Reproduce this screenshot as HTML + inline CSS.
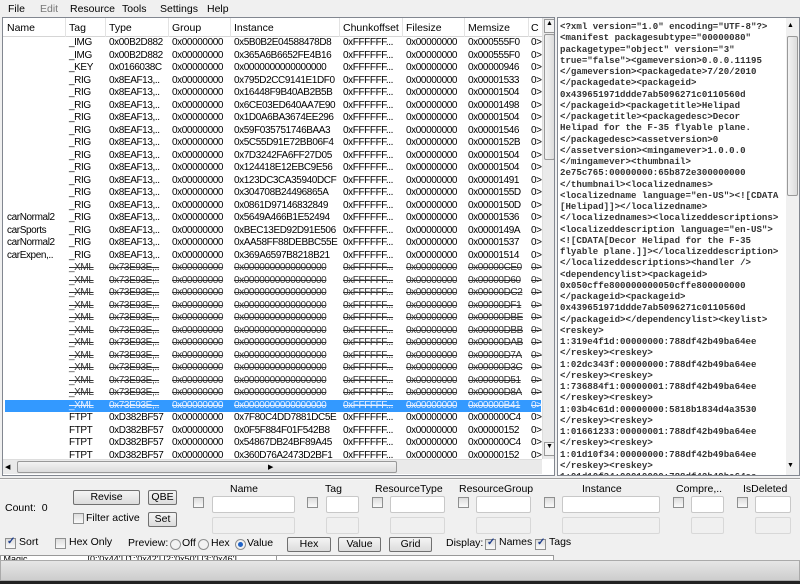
<!DOCTYPE html>
<html><head><meta charset="utf-8"><style>
*{box-sizing:border-box;margin:0;padding:0}
body{width:800px;height:584px;overflow:hidden;background:#f0f0f0;font-family:"Liberation Sans",sans-serif;font-size:10px;color:#000;position:relative}
.a{position:absolute}
.menu span{position:absolute;top:3px;font-size:10.5px}
#grid{left:2px;top:17px;width:553px;height:459px;background:#fff;border:1px solid #828790;overflow:hidden}
.hdr{position:absolute;top:0;left:0;height:19px;width:540px;border-bottom:1px solid #d5d5d5;background:#fff}
.hdr span{position:absolute;top:4px;font-size:10.5px}
.hdr i{position:absolute;top:0;width:1px;height:19px;background:#e3e3e3}
.row{position:absolute;left:0;width:538px;height:12.5px;white-space:nowrap;letter-spacing:-0.4px;font-size:10px;line-height:12.5px}
.row span{position:absolute}
.st span{text-decoration:line-through;color:#333}
.sel{background:#3399ff;color:#e8f0ff}
.sel span{text-decoration:line-through}
.c0{left:4px}.c1{left:66px}.c2{left:106px}.c3{left:169px}.c4{left:231px}.c5{left:340px}.c6{left:403px}.c7{left:465px}.c8{left:528px}
#vs{left:539px;top:0;width:13px;height:441px;background:#eaeaea;border-left:1px solid #ddd}
#hs{left:0;top:441px;width:539px;height:15px;background:#eaeaea;border-top:1px solid #ddd}
#xml{left:557px;top:17px;width:243px;height:459px;background:#fff;border:1px solid #828790;overflow:hidden}
#xml pre{position:absolute;left:2px;top:3px;font-family:"Liberation Mono",monospace;font-size:9.1px;line-height:11.25px;font-weight:bold;color:#333}
.btn{position:absolute;height:15px;border:1px solid #707070;border-radius:2px;background:linear-gradient(#f4f4f4,#dcdcdc);text-align:center;font-size:10.5px;line-height:13px}
.cb{position:absolute;width:11px;height:11px;border:1px solid #8e8f8f;background:linear-gradient(#ddd,#fafafa)}
.cb.k::after{content:"✓";position:absolute;left:1px;top:-3px;font-size:10px;color:#1c3c8c;font-weight:bold}
.inp{position:absolute;height:17px;border:1px solid #c8c8c8;background:#fff;border-radius:2px}
.inp.d{background:#f0f0f0;border-color:#d8d8d8}
.lb{position:absolute;font-size:10.5px}
.rd{position:absolute;width:11px;height:11px;border-radius:50%;border:1px solid #8e8f8f;background:#f2f2f2}
.rd.on::after{content:"";position:absolute;left:2px;top:2px;width:5px;height:5px;border-radius:50%;background:#1f63c6}
</style></head><body>
<div class="menu">
<span style="left:8px">File</span><span style="left:40px;color:#777">Edit</span><span style="left:70px">Resource</span><span style="left:122px">Tools</span><span style="left:160px">Settings</span><span style="left:207px">Help</span>
</div>
<div id="grid" class="a">
<div class="hdr">
<span style="left:4px">Name</span><span style="left:66px">Tag</span><span style="left:106px">Type</span><span style="left:169px">Group</span><span style="left:231px">Instance</span><span style="left:340px">Chunkoffset</span><span style="left:403px">Filesize</span><span style="left:465px">Memsize</span><span style="left:528px">C</span>
<i style="left:62px"></i><i style="left:102px"></i><i style="left:165px"></i><i style="left:227px"></i><i style="left:336px"></i><i style="left:399px"></i><i style="left:461px"></i><i style="left:525px"></i>
</div>
<div class="row" style="top:19px"><span class="c1">_IMG</span><span class="c2">0x00B2D882</span><span class="c3">0x00000000</span><span class="c4">0x5B0B2E04588478D8</span><span class="c5">0xFFFFFF...</span><span class="c6">0x00000000</span><span class="c7">0x000555F0</span><span class="c8">0&gt;</span></div>
<div class="row" style="top:31.5px"><span class="c1">_IMG</span><span class="c2">0x00B2D882</span><span class="c3">0x00000000</span><span class="c4">0x365A6B6652FE4B16</span><span class="c5">0xFFFFFF...</span><span class="c6">0x00000000</span><span class="c7">0x000555F0</span><span class="c8">0&gt;</span></div>
<div class="row" style="top:44px"><span class="c1">_KEY</span><span class="c2">0x0166038C</span><span class="c3">0x00000000</span><span class="c4">0x0000000000000000</span><span class="c5">0xFFFFFF...</span><span class="c6">0x00000000</span><span class="c7">0x00000946</span><span class="c8">0&gt;</span></div>
<div class="row" style="top:56.5px"><span class="c1">_RIG</span><span class="c2">0x8EAF13,..</span><span class="c3">0x00000000</span><span class="c4">0x795D2CC9141E1DF0</span><span class="c5">0xFFFFFF...</span><span class="c6">0x00000000</span><span class="c7">0x00001533</span><span class="c8">0&gt;</span></div>
<div class="row" style="top:69px"><span class="c1">_RIG</span><span class="c2">0x8EAF13,..</span><span class="c3">0x00000000</span><span class="c4">0x16448F9B40AB2B5B</span><span class="c5">0xFFFFFF...</span><span class="c6">0x00000000</span><span class="c7">0x00001504</span><span class="c8">0&gt;</span></div>
<div class="row" style="top:81.5px"><span class="c1">_RIG</span><span class="c2">0x8EAF13,..</span><span class="c3">0x00000000</span><span class="c4">0x6CE03ED640AA7E90</span><span class="c5">0xFFFFFF...</span><span class="c6">0x00000000</span><span class="c7">0x00001498</span><span class="c8">0&gt;</span></div>
<div class="row" style="top:94px"><span class="c1">_RIG</span><span class="c2">0x8EAF13,..</span><span class="c3">0x00000000</span><span class="c4">0x1D0A6BA3674EE296</span><span class="c5">0xFFFFFF...</span><span class="c6">0x00000000</span><span class="c7">0x00001504</span><span class="c8">0&gt;</span></div>
<div class="row" style="top:106.5px"><span class="c1">_RIG</span><span class="c2">0x8EAF13,..</span><span class="c3">0x00000000</span><span class="c4">0x59F035751746BAA3</span><span class="c5">0xFFFFFF...</span><span class="c6">0x00000000</span><span class="c7">0x00001546</span><span class="c8">0&gt;</span></div>
<div class="row" style="top:119px"><span class="c1">_RIG</span><span class="c2">0x8EAF13,..</span><span class="c3">0x00000000</span><span class="c4">0x5C55D91E72BB06F4</span><span class="c5">0xFFFFFF...</span><span class="c6">0x00000000</span><span class="c7">0x0000152B</span><span class="c8">0&gt;</span></div>
<div class="row" style="top:131.5px"><span class="c1">_RIG</span><span class="c2">0x8EAF13,..</span><span class="c3">0x00000000</span><span class="c4">0x7D3242FA6FF27D05</span><span class="c5">0xFFFFFF...</span><span class="c6">0x00000000</span><span class="c7">0x00001504</span><span class="c8">0&gt;</span></div>
<div class="row" style="top:144px"><span class="c1">_RIG</span><span class="c2">0x8EAF13,..</span><span class="c3">0x00000000</span><span class="c4">0x124418E12EBC9E56</span><span class="c5">0xFFFFFF...</span><span class="c6">0x00000000</span><span class="c7">0x00001504</span><span class="c8">0&gt;</span></div>
<div class="row" style="top:156.5px"><span class="c1">_RIG</span><span class="c2">0x8EAF13,..</span><span class="c3">0x00000000</span><span class="c4">0x123DC3CA35940DCF</span><span class="c5">0xFFFFFF...</span><span class="c6">0x00000000</span><span class="c7">0x00001491</span><span class="c8">0&gt;</span></div>
<div class="row" style="top:169px"><span class="c1">_RIG</span><span class="c2">0x8EAF13,..</span><span class="c3">0x00000000</span><span class="c4">0x304708B24496865A</span><span class="c5">0xFFFFFF...</span><span class="c6">0x00000000</span><span class="c7">0x0000155D</span><span class="c8">0&gt;</span></div>
<div class="row" style="top:181.5px"><span class="c1">_RIG</span><span class="c2">0x8EAF13,..</span><span class="c3">0x00000000</span><span class="c4">0x0861D97146832849</span><span class="c5">0xFFFFFF...</span><span class="c6">0x00000000</span><span class="c7">0x0000150D</span><span class="c8">0&gt;</span></div>
<div class="row" style="top:194px"><span class="c0">carNormal2</span><span class="c1">_RIG</span><span class="c2">0x8EAF13,..</span><span class="c3">0x00000000</span><span class="c4">0x5649A466B1E52494</span><span class="c5">0xFFFFFF...</span><span class="c6">0x00000000</span><span class="c7">0x00001536</span><span class="c8">0&gt;</span></div>
<div class="row" style="top:206.5px"><span class="c0">carSports</span><span class="c1">_RIG</span><span class="c2">0x8EAF13,..</span><span class="c3">0x00000000</span><span class="c4">0xBEC13ED92D91E506</span><span class="c5">0xFFFFFF...</span><span class="c6">0x00000000</span><span class="c7">0x0000149A</span><span class="c8">0&gt;</span></div>
<div class="row" style="top:219px"><span class="c0">carNormal2</span><span class="c1">_RIG</span><span class="c2">0x8EAF13,..</span><span class="c3">0x00000000</span><span class="c4">0xAA58FF88DEBBC55E</span><span class="c5">0xFFFFFF...</span><span class="c6">0x00000000</span><span class="c7">0x00001537</span><span class="c8">0&gt;</span></div>
<div class="row" style="top:231.5px"><span class="c0">carExpen,..</span><span class="c1">_RIG</span><span class="c2">0x8EAF13,..</span><span class="c3">0x00000000</span><span class="c4">0x369A6597B8218B21</span><span class="c5">0xFFFFFF...</span><span class="c6">0x00000000</span><span class="c7">0x00001514</span><span class="c8">0&gt;</span></div>
<div class="row st" style="top:244px"><span class="c1">_XML</span><span class="c2">0x73E93E,..</span><span class="c3">0x00000000</span><span class="c4">0x0000000000000000</span><span class="c5">0xFFFFFF...</span><span class="c6">0x00000000</span><span class="c7">0x00000CE0</span><span class="c8">0&gt;</span></div>
<div class="row st" style="top:256.5px"><span class="c1">_XML</span><span class="c2">0x73E93E,..</span><span class="c3">0x00000000</span><span class="c4">0x0000000000000000</span><span class="c5">0xFFFFFF...</span><span class="c6">0x00000000</span><span class="c7">0x00000D60</span><span class="c8">0&gt;</span></div>
<div class="row st" style="top:269px"><span class="c1">_XML</span><span class="c2">0x73E93E,..</span><span class="c3">0x00000000</span><span class="c4">0x0000000000000000</span><span class="c5">0xFFFFFF...</span><span class="c6">0x00000000</span><span class="c7">0x00000DC2</span><span class="c8">0&gt;</span></div>
<div class="row st" style="top:281.5px"><span class="c1">_XML</span><span class="c2">0x73E93E,..</span><span class="c3">0x00000000</span><span class="c4">0x0000000000000000</span><span class="c5">0xFFFFFF...</span><span class="c6">0x00000000</span><span class="c7">0x00000DF1</span><span class="c8">0&gt;</span></div>
<div class="row st" style="top:294px"><span class="c1">_XML</span><span class="c2">0x73E93E,..</span><span class="c3">0x00000000</span><span class="c4">0x0000000000000000</span><span class="c5">0xFFFFFF...</span><span class="c6">0x00000000</span><span class="c7">0x00000DBE</span><span class="c8">0&gt;</span></div>
<div class="row st" style="top:306.5px"><span class="c1">_XML</span><span class="c2">0x73E93E,..</span><span class="c3">0x00000000</span><span class="c4">0x0000000000000000</span><span class="c5">0xFFFFFF...</span><span class="c6">0x00000000</span><span class="c7">0x00000DBB</span><span class="c8">0&gt;</span></div>
<div class="row st" style="top:319px"><span class="c1">_XML</span><span class="c2">0x73E93E,..</span><span class="c3">0x00000000</span><span class="c4">0x0000000000000000</span><span class="c5">0xFFFFFF...</span><span class="c6">0x00000000</span><span class="c7">0x00000DAB</span><span class="c8">0&gt;</span></div>
<div class="row st" style="top:331.5px"><span class="c1">_XML</span><span class="c2">0x73E93E,..</span><span class="c3">0x00000000</span><span class="c4">0x0000000000000000</span><span class="c5">0xFFFFFF...</span><span class="c6">0x00000000</span><span class="c7">0x00000D7A</span><span class="c8">0&gt;</span></div>
<div class="row st" style="top:344px"><span class="c1">_XML</span><span class="c2">0x73E93E,..</span><span class="c3">0x00000000</span><span class="c4">0x0000000000000000</span><span class="c5">0xFFFFFF...</span><span class="c6">0x00000000</span><span class="c7">0x00000D3C</span><span class="c8">0&gt;</span></div>
<div class="row st" style="top:356.5px"><span class="c1">_XML</span><span class="c2">0x73E93E,..</span><span class="c3">0x00000000</span><span class="c4">0x0000000000000000</span><span class="c5">0xFFFFFF...</span><span class="c6">0x00000000</span><span class="c7">0x00000D51</span><span class="c8">0&gt;</span></div>
<div class="row st" style="top:369px"><span class="c1">_XML</span><span class="c2">0x73E93E,..</span><span class="c3">0x00000000</span><span class="c4">0x0000000000000000</span><span class="c5">0xFFFFFF...</span><span class="c6">0x00000000</span><span class="c7">0x00000D8A</span><span class="c8">0&gt;</span></div>
<div class="row sel" style="top:381.5px;left:2px;width:536px"><span style="left:64px">_XML</span><span style="left:104px">0x73E93E,..</span><span style="left:167px">0x00000000</span><span style="left:229px">0x0000000000000000</span><span style="left:338px">0xFFFFFF...</span><span style="left:401px">0x00000000</span><span style="left:463px">0x00000B41</span><span style="left:526px">0&gt;</span></div>
<div class="row" style="top:394px"><span class="c1">FTPT</span><span class="c2">0xD382BF57</span><span class="c3">0x00000000</span><span class="c4">0x7F80C4DD7881DC5E</span><span class="c5">0xFFFFFF...</span><span class="c6">0x00000000</span><span class="c7">0x000000C4</span><span class="c8">0&gt;</span></div>
<div class="row" style="top:406.5px"><span class="c1">FTPT</span><span class="c2">0xD382BF57</span><span class="c3">0x00000000</span><span class="c4">0x0F5F884F01F542B8</span><span class="c5">0xFFFFFF...</span><span class="c6">0x00000000</span><span class="c7">0x00000152</span><span class="c8">0&gt;</span></div>
<div class="row" style="top:419px"><span class="c1">FTPT</span><span class="c2">0xD382BF57</span><span class="c3">0x00000000</span><span class="c4">0x54867DB24BF89A45</span><span class="c5">0xFFFFFF...</span><span class="c6">0x00000000</span><span class="c7">0x000000C4</span><span class="c8">0&gt;</span></div>
<div class="row" style="top:431.5px"><span class="c1">FTPT</span><span class="c2">0xD382BF57</span><span class="c3">0x00000000</span><span class="c4">0x360D76A2473D2BF1</span><span class="c5">0xFFFFFF...</span><span class="c6">0x00000000</span><span class="c7">0x00000152</span><span class="c8">0&gt;</span></div>
<div id="vs" class="a">
<div class="a" style="left:1px;top:1px;width:11px;height:14px;border:1px solid #999;background:#f4f4f4;font-size:7px;text-align:center">▲</div>
<div class="a" style="left:1px;top:16px;width:11px;height:126px;border:1px solid #999;border-radius:2px;background:linear-gradient(90deg,#f3f3f3,#dcdcdc)"></div>
<div class="a" style="left:1px;top:424px;width:11px;height:14px;border:1px solid #999;background:#f4f4f4;font-size:7px;text-align:center">▼</div>
</div>
<div id="hs" class="a">
<div class="a" style="left:2px;top:3px;font-size:7px">◀</div>
<div class="a" style="left:14px;top:1px;width:380px;height:12px;border:1px solid #999;border-radius:2px;background:linear-gradient(#f3f3f3,#dcdcdc)"></div>
<div class="a" style="left:265px;top:3px;font-size:7px">▶</div>
</div>
</div>
<div id="xml" class="a">
<pre>&lt;?xml version="1.0" encoding="UTF-8"?&gt;
&lt;manifest packagesubtype="00000080"
packagetype="object" version="3"
true="false"&gt;&lt;gameversion&gt;0.0.0.11195
&lt;/gameversion&gt;&lt;packagedate&gt;7/20/2010
&lt;/packagedate&gt;&lt;packageid&gt;
0x439651971ddde7ab5096271c0110560d
&lt;/packageid&gt;&lt;packagetitle&gt;Helipad
&lt;/packagetitle&gt;&lt;packagedesc&gt;Decor
Helipad for the F-35 flyable plane.
&lt;/packagedesc&gt;&lt;assetversion&gt;0
&lt;/assetversion&gt;&lt;mingamever&gt;1.0.0.0
&lt;/mingamever&gt;&lt;thumbnail&gt;
2e75c765:00000000:65b872e300000000
&lt;/thumbnail&gt;&lt;localizednames&gt;
&lt;localizedname language="en-US"&gt;&lt;![CDATA
[Helipad]]&gt;&lt;/localizedname&gt;
&lt;/localizednames&gt;&lt;localizeddescriptions&gt;
&lt;localizeddescription language="en-US"&gt;
&lt;![CDATA[Decor Helipad for the F-35
flyable plane.]]&gt;&lt;/localizeddescription&gt;
&lt;/localizeddescriptions&gt;&lt;handler /&gt;
&lt;dependencylist&gt;&lt;packageid&gt;
0x050cffe800000000050cffe800000000
&lt;/packageid&gt;&lt;packageid&gt;
0x439651971ddde7ab5096271c0110560d
&lt;/packageid&gt;&lt;/dependencylist&gt;&lt;keylist&gt;
&lt;reskey&gt;
1:319e4f1d:00000000:788df42b49ba64ee
&lt;/reskey&gt;&lt;reskey&gt;
1:02dc343f:00000000:788df42b49ba64ee
&lt;/reskey&gt;&lt;reskey&gt;
1:736884f1:00000001:788df42b49ba64ee
&lt;/reskey&gt;&lt;reskey&gt;
1:03b4c61d:00000000:5818b1834d4a3530
&lt;/reskey&gt;&lt;reskey&gt;
1:01661233:00000001:788df42b49ba64ee
&lt;/reskey&gt;&lt;reskey&gt;
1:01d10f34:00000000:788df42b49ba64ee
&lt;/reskey&gt;&lt;reskey&gt;
1:01d10f34:00010000:788df42b49ba64ee
&lt;/reskey&gt;&lt;reskey&gt;</pre>
<div class="a" style="left:228px;top:0;width:13px;height:457px;background:#f0f0f0">
<div class="a" style="left:1px;top:4px;font-size:7px">▲</div>
<div class="a" style="left:1px;top:18px;width:11px;height:160px;border:1px solid #999;border-radius:2px;background:linear-gradient(90deg,#f3f3f3,#dcdcdc)"></div>
<div class="a" style="left:1px;top:444px;font-size:7px">▼</div>
</div>
</div>
<div class="a" style="left:0;top:478px;width:800px;height:2px;border-top:1px solid #a0a0a0;background:#f8f8f8"></div>
<span class="lb" style="left:5px;top:502px">Count:&nbsp; 0</span>
<div class="btn" style="left:73px;top:490px;width:67px">Revise</div>
<div class="btn" style="left:148px;top:490px;width:29px">QBE</div>
<div class="cb" style="left:73px;top:513px"></div><span class="lb" style="left:86px;top:512px">Filter active</span>
<div class="btn" style="left:148px;top:512px;width:29px">Set</div>
<span class="lb" style="left:230px;top:483px">Name</span>
<div class="cb" style="left:193px;top:497px"></div><div class="inp" style="left:212px;top:496px;width:83px"></div><div class="inp d" style="left:212px;top:517px;width:83px"></div>
<span class="lb" style="left:325px;top:483px">Tag</span>
<div class="cb" style="left:307px;top:497px"></div><div class="inp" style="left:326px;top:496px;width:33px"></div><div class="inp d" style="left:326px;top:517px;width:33px"></div>
<span class="lb" style="left:375px;top:483px">ResourceType</span>
<div class="cb" style="left:372px;top:497px"></div><div class="inp" style="left:390px;top:496px;width:55px"></div><div class="inp d" style="left:390px;top:517px;width:55px"></div>
<span class="lb" style="left:459px;top:483px">ResourceGroup</span>
<div class="cb" style="left:458px;top:497px"></div><div class="inp" style="left:476px;top:496px;width:55px"></div><div class="inp d" style="left:476px;top:517px;width:55px"></div>
<span class="lb" style="left:582px;top:483px">Instance</span>
<div class="cb" style="left:544px;top:497px"></div><div class="inp" style="left:562px;top:496px;width:98px"></div><div class="inp d" style="left:562px;top:517px;width:98px"></div>
<span class="lb" style="left:676px;top:483px">Compre,..</span>
<div class="cb" style="left:673px;top:497px"></div><div class="inp" style="left:691px;top:496px;width:33px"></div><div class="inp d" style="left:691px;top:517px;width:33px"></div>
<span class="lb" style="left:743px;top:483px">IsDeleted</span>
<div class="cb" style="left:737px;top:497px"></div><div class="inp" style="left:755px;top:496px;width:36px"></div><div class="inp d" style="left:755px;top:517px;width:36px"></div>
<div class="cb k" style="left:5px;top:538px"></div><span class="lb" style="left:19px;top:536px">Sort</span>
<div class="cb" style="left:55px;top:538px"></div><span class="lb" style="left:69px;top:536px">Hex Only</span>
<span class="lb" style="left:128px;top:537px">Preview:</span>
<div class="rd" style="left:170px;top:539px"></div><span class="lb" style="left:182px;top:537px">Off</span>
<div class="rd" style="left:198px;top:539px"></div><span class="lb" style="left:211px;top:537px">Hex</span>
<div class="rd on" style="left:235px;top:539px"></div><span class="lb" style="left:247px;top:537px">Value</span>
<div class="btn" style="left:287px;top:537px;width:44px">Hex</div>
<div class="btn" style="left:338px;top:537px;width:43px">Value</div>
<div class="btn" style="left:389px;top:537px;width:43px">Grid</div>
<span class="lb" style="left:446px;top:537px">Display:</span>
<div class="cb k" style="left:485px;top:539px"></div><span class="lb" style="left:499px;top:536px">Names</span>
<div class="cb k" style="left:535px;top:539px"></div><span class="lb" style="left:549px;top:536px">Tags</span>
<div class="a" style="left:0;top:555px;width:277px;height:5px;overflow:hidden;border:1px solid #999;border-bottom:none;background:#fff;font-size:9px;line-height:6px;white-space:nowrap">&nbsp;Magic&nbsp;&nbsp;&nbsp;&nbsp;&nbsp;&nbsp;&nbsp;&nbsp;&nbsp;&nbsp;&nbsp;&nbsp;&nbsp;&nbsp;&nbsp;&nbsp;&nbsp;&nbsp;&nbsp;&nbsp;&nbsp;&nbsp;&nbsp;&nbsp;[0:'0x44'] [1:'0x42'] [2:'0x50'] [3:'0x46']</div>
<div class="a" style="left:277px;top:555px;width:277px;height:5px;border:1px solid #999;border-bottom:none;border-left:none;background:#fff"></div>
<div class="a" style="left:0;top:560px;width:800px;height:21px;border:1px solid #aaa;background:linear-gradient(#e6e6e6,#cdcdcd)"></div>
<div class="a" style="left:0;top:581px;width:800px;height:3px;background:#222"></div>
</body></html>
